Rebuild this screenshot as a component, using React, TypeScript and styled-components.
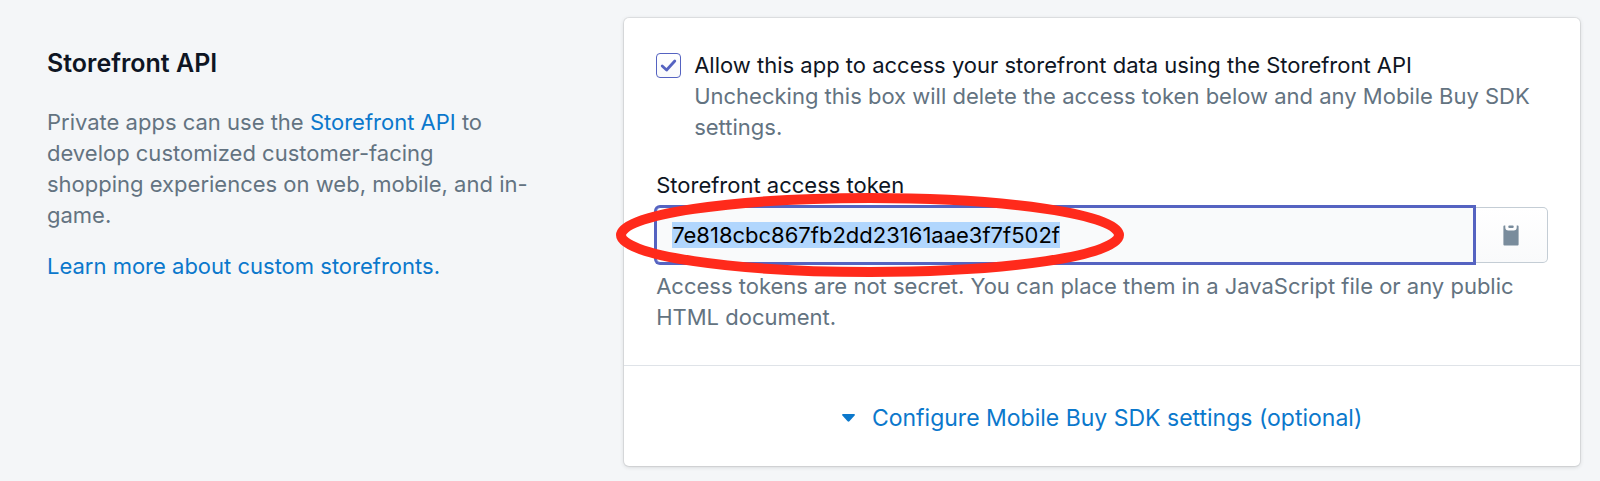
import React, { useEffect, useRef } from "react";
import styled, { createGlobalStyle } from "styled-components";

const color = {
  page: "#f4f6f8",
  ink: "#0e1523",
  subdued: "#637381",
  link: "#0b78cc",
  indigo: "#5563c1",
  line: "#dfe3e8",
  control: "#c4cdd5",
  icon: "#798c9c",
  marker: "#ff2a1b",
};

const GlobalStyle = createGlobalStyle`
  *, *::before, *::after { box-sizing: border-box; }
  body {
    margin: 0;
    background: ${color.page};
    color: ${color.ink};
    font: 400 22px/31px Inter, "Liberation Sans", sans-serif;
  }
`;

const Section = styled.section`
  display: grid;
  grid-template-columns: minmax(0, 100fr) minmax(0, 197fr);
  gap: 92px;
  padding: 18px 20px 15px 47px;
`;

const Annotation = styled.div`
  display: flex;
  flex-direction: column;
  gap: 20px;
  padding-top: 29px;
  color: ${color.subdued};
`;

const Title = styled.h2`
  margin: 0 0 8px;
  font-size: 25px;
  line-height: 32px;
  font-weight: 600;
  color: ${color.ink};
`;

const Paragraph = styled.p`
  margin: 0;
`;

const Link = styled.a`
  color: ${color.link};
  text-decoration: none;
`;

const Card = styled.div`
  background: #fff;
  border-radius: 5px;
  box-shadow: 0 0 0 1px rgba(63, 63, 68, 0.09), 0 1px 4px rgba(63, 63, 68, 0.2);
`;

const CardBody = styled.form`
  padding: 32px;
`;

const Choice = styled.div`
  display: grid;
  grid-template-columns: 25px minmax(0, 1fr);
  column-gap: 13px;
  margin-bottom: 27px;
`;

const CheckboxFrame = styled.span`
  position: relative;
  height: 25px;
  margin-top: 3px;
`;

const Checkbox = styled.input`
  appearance: none;
  display: block;
  width: 100%;
  height: 100%;
  margin: 0;
  border: 1px solid ${color.indigo};
  border-radius: 4px;
  background: linear-gradient(#fff, #f9fafb);

  &:not(:checked) + svg { display: none; }
`;

const CheckMark = styled.svg`
  position: absolute;
  inset: 0;
  pointer-events: none;
`;

const Label = styled.label`
  display: block;
`;

const Help = styled.p`
  margin: 0;
  color: ${color.subdued};
`;

const TokenRow = styled.div`
  position: relative;
  display: flex;
  height: 56px;
  margin: 6px 0 8px;
`;

const TokenInput = styled.input`
  position: relative;
  z-index: 1;
  flex: 1;
  min-width: 0;
  padding: 0 15px;
  border: 1px solid ${color.indigo};
  border-radius: 4px 0 0 4px;
  outline: none;
  box-shadow: 0 0 0 2px ${color.indigo};
  background: #f9fafb;
  color: #000;
  font: inherit;
  line-height: normal;

  &::selection {
    background: #b1d6fd;
    color: #000;
  }
`;

const CopyButton = styled.button`
  display: flex;
  align-items: center;
  justify-content: center;
  width: 74px;
  padding: 0;
  border: 1px solid ${color.control};
  border-left: 0;
  border-radius: 0 5px 5px 0;
  background: linear-gradient(#fff, #f9fafb);
`;

const Marker = styled.svg`
  position: absolute;
  z-index: 2;
  left: -40px;
  top: -14px;
  pointer-events: none;
`;

const CardFooter = styled.div`
  display: flex;
  justify-content: center;
  padding: 36px 32px 32px;
  border-top: 1px solid ${color.line};
`;

const Disclosure = styled.button`
  display: flex;
  align-items: center;
  gap: 17px;
  padding: 0;
  border: 0;
  background: none;
  color: ${color.link};
  font: inherit;
  font-size: 23px;
  line-height: 32px;
`;

export default function App() {
  const token = useRef<HTMLInputElement>(null);

  useEffect(() => {
    token.current?.focus();
    token.current?.select();
  }, []);

  return (
    <>
      <GlobalStyle />
      <Section>
        <Annotation>
          <Title>Storefront API</Title>
          <Paragraph>
            Private apps can use the <Link href="#api">Storefront API</Link> to develop customized
            customer-facing shopping experiences on web, mobile, and in-game.
          </Paragraph>
          <Paragraph>
            <Link href="#custom-storefronts">Learn more about custom storefronts.</Link>
          </Paragraph>
        </Annotation>

        <Card>
          <CardBody>
            <Choice>
              <CheckboxFrame>
                <Checkbox type="checkbox" id="allow" defaultChecked aria-describedby="allow-help" />
                <CheckMark viewBox="0 0 25 25" aria-hidden="true">
                  <path d="M6.2 13 L10.6 17 L18.8 8" fill="none" stroke={color.indigo} strokeWidth="2.8" strokeLinecap="round" strokeLinejoin="round" />
                </CheckMark>
              </CheckboxFrame>
              <div>
                <Label htmlFor="allow">
                  Allow this app to access your storefront data using the Storefront API
                </Label>
                <Help id="allow-help">
                  Unchecking this box will delete the access token below and any Mobile Buy SDK settings.
                </Help>
              </div>
            </Choice>

            <Label htmlFor="token">Storefront access token</Label>
            <TokenRow>
              <TokenInput
                ref={token}
                id="token"
                type="text"
                readOnly
                defaultValue="7e818cbc867fb2dd23161aae3f7f502f"
                aria-describedby="token-help"
              />
              <CopyButton type="button" aria-label="Copy token">
                <svg width="16" height="21" viewBox="0 0 16 21" fill={color.icon} aria-hidden="true">
                  <path d="M1 0.5H2.3V2.5A3 3 0 0 0 5.3 5.5H10.7A3 3 0 0 0 13.7 2.5V0.5H15A1 1 0 0 1 15.6 1.5V19.5A1 1 0 0 1 14.6 20.5H1.4A1 1 0 0 1 0.4 19.5V1.5A1 1 0 0 1 1 0.5Z" />
                  <rect x="5.3" y="0.5" width="5.4" height="2.4" rx="1" />
                </svg>
              </CopyButton>
              <Marker width="508" height="84" viewBox="0 0 508 84" aria-hidden="true">
                <ellipse cx="254" cy="42" rx="249" ry="37" fill="none" stroke={color.marker} strokeWidth="10" />
              </Marker>
            </TokenRow>
            <Help id="token-help">
              Access tokens are not secret. You can place them in a JavaScript file or any public HTML
              document.
            </Help>
          </CardBody>
          <CardFooter>
            <Disclosure type="button">
              <svg width="13" height="8" viewBox="0 0 13 8" fill={color.link} aria-hidden="true">
                <path d="M0.8 0H12.2Q13.3 0.3 12.6 1.4L7.4 7.3Q6.5 8.2 5.6 7.3L0.4 1.4Q-0.3 0.3 0.8 0Z" />
              </svg>
              Configure Mobile Buy SDK settings (optional)
            </Disclosure>
          </CardFooter>
        </Card>
      </Section>
    </>
  );
}
